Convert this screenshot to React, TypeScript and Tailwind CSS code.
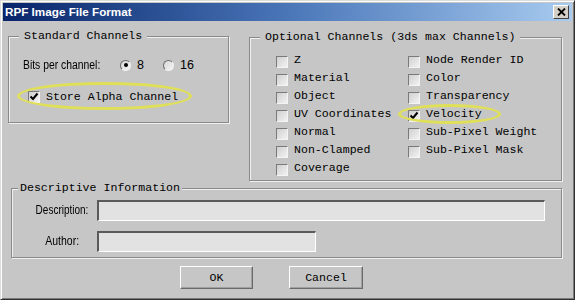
import React from 'react';

const mono = "font-['Liberation_Mono',monospace] text-[11.6px] leading-[14px] text-black";

const Check = ({ checked }: { checked?: boolean }) => (
  <span className="w-[12px] h-[12px] shrink-0 border-t border-l border-t-[#7a7a7a] border-l-[#7a7a7a] border-b border-r border-b-[#f4f4f4] border-r-[#f4f4f4] bg-gradient-to-br from-[#d0d0d0] to-[#f2f2f2] flex items-center justify-center">
    {checked && (
      <svg width="10" height="10" viewBox="0 0 10 10">
        <path d="M1.5 4.5 L4 7 L8.5 1.5" fill="none" stroke="#000" strokeWidth="2" />
      </svg>
    )}
  </span>
);

const Radio = ({ on }: { on?: boolean }) => (
  <span className="w-[11px] h-[11px] rounded-full border border-t-[#6e6e6e] border-l-[#6e6e6e] border-b-[#f2f2f2] border-r-[#f2f2f2] bg-gradient-to-br from-[#d8d8d8] to-[#f4f4f4] flex items-center justify-center">
    {on && <span className="w-[4px] h-[4px] rounded-full bg-black" />}
  </span>
);

const Opt = ({ label, checked }: { label: string; checked?: boolean }) => (
  <div className="h-[18px] flex items-center gap-[6px]">
    <span className="mt-[4px]"><Check checked={checked} /></span>
    <span className={mono}>{label}</span>
  </div>
);

const Group = ({ title, className, children }: { title: string; className: string; children: React.ReactNode }) => (
  <div className={`relative border border-[#8a8a8a] shadow-[inset_1px_1px_0_#f0f0f0,1px_1px_0_#f0f0f0] ${className}`}>
    <span className={`absolute -top-[8px] bg-[#c6c6c6] ${mono} ${title === 'Descriptive Information' ? 'left-[6px] px-[2px]' : 'left-[10px] px-[5px]'}`}>
      {title}
    </span>
    {children}
  </div>
);

const Sunken = ({ w }: { w: string }) => (
  <div className={`${w} h-[21px] border-t-2 border-l-2 border-t-[#5a5a5a] border-l-[#5a5a5a] border-b border-r border-b-white border-r-white bg-[#e2e2e2]`} />
);

const Btn = ({ label, w }: { label: string; w: string }) => (
  <div className={`${w} h-[23px] border-t border-l border-t-white border-l-white border-b border-r border-b-[#6a6a6a] border-r-[#6a6a6a] shadow-[inset_-1px_-1px_0_#a0a0a0] flex items-center justify-center ${mono}`}>
    {label}
  </div>
);

export default function App() {
  return (
    <div className="w-[575px] h-[300px] bg-[#c6c6c6] border border-t-[#dcdcdc] border-l-[#dcdcdc] border-b-[#303030] border-r-[#303030] shadow-[inset_1px_1px_0_#fff,inset_-1px_-1px_0_#7a7a7a] p-[2px] flex flex-col overflow-hidden">
      {/* title bar */}
      <div className="h-[18px] bg-gradient-to-r from-[#0a246a] via-[#4a76b8] to-[#a8cbef] flex items-center justify-between pl-[2px] pr-[3px]">
        <span className="font-['Liberation_Sans',Arial,sans-serif] font-bold text-[11.7px] text-white">RPF Image File Format</span>
        <div className="w-[16px] h-[14px] bg-[#d4d0c8] border-t border-l border-t-white border-l-white border-b border-r border-b-[#404040] border-r-[#404040] flex items-center justify-center">
          <svg width="9" height="8" viewBox="0 0 9 8">
            <path d="M1 0.5 L8 7.5 M8 0.5 L1 7.5" stroke="#000" strokeWidth="1.8" />
          </svg>
        </div>
      </div>

      <div className="flex items-start mt-[15px] ml-[5px]">
        {/* standard channels */}
        <Group title="Standard Channels" className="w-[221px] h-[87px] pt-[21px] pl-[14px]">
          <div className="h-[14px] flex items-center">
            <span className="w-[97px] font-['Liberation_Sans',Arial,sans-serif] text-[12.5px] text-black">
              <span className="inline-block scale-x-[0.83] origin-left whitespace-nowrap">Bits per channel:</span>
            </span>
            <Radio on />
            <span className="ml-[6px] w-[26px] font-['Liberation_Sans',Arial,sans-serif] text-[12.5px] text-black">8</span>
            <Radio />
            <span className="ml-[6px] font-['Liberation_Sans',Arial,sans-serif] text-[12.5px] text-black">16</span>
          </div>
          <div className="h-[14px] mt-[18px] ml-[5px] flex items-center gap-[6px]">
            <Check checked />
            <span className={mono}>Store Alpha Channel</span>
          </div>
          <div className="absolute left-[8px] top-[45px] w-[175px] h-[28px] rounded-[50%] border-[3px] border-[#e0e058] blur-[0.4px]" />
        </Group>

        {/* optional channels */}
        <Group title="Optional Channels (3ds max Channels)" className="ml-[20px] mt-[1px] w-[313px] h-[144px] pt-[13px] pl-[26px] flex">
          <div className="w-[132px] flex flex-col">
            <Opt label="Z" />
            <Opt label="Material" />
            <Opt label="Object" />
            <Opt label="UV Coordinates" />
            <Opt label="Normal" />
            <Opt label="Non-Clamped" />
            <Opt label="Coverage" />
          </div>
          <div className="flex flex-col">
            <Opt label="Node Render ID" />
            <Opt label="Color" />
            <Opt label="Transparency" />
            <Opt label="Velocity" checked />
            <Opt label="Sub-Pixel Weight" />
            <Opt label="Sub-Pixel Mask" />
          </div>
          <div className="absolute left-[148px] top-[66px] w-[103px] h-[20px] rounded-[50%] border-[3px] border-[#e0e058] blur-[0.4px]" />
        </Group>
      </div>

      {/* descriptive information */}
      <Group title="Descriptive Information" className="mt-[7px] ml-[8px] w-[551px] h-[70px] pt-[11px] pl-[15px]">
        <div className="flex items-center">
          <span className="w-[70px] text-center font-['Liberation_Sans',Arial,sans-serif] text-[12.5px] text-black">
            <span className="inline-block scale-x-[0.8] whitespace-nowrap">Description:</span>
          </span>
          <Sunken w="w-[448px]" />
        </div>
        <div className="flex items-center mt-[10px]">
          <span className="w-[70px] text-center font-['Liberation_Sans',Arial,sans-serif] text-[12.5px] text-black">
            <span className="inline-block scale-x-[0.84] whitespace-nowrap">Author:</span>
          </span>
          <Sunken w="w-[219px]" />
        </div>
      </Group>

      <div className="flex mt-[8px] ml-[177px] gap-[36px]">
        <Btn label="OK" w="w-[73px]" />
        <Btn label="Cancel" w="w-[74px]" />
      </div>
    </div>
  );
}
